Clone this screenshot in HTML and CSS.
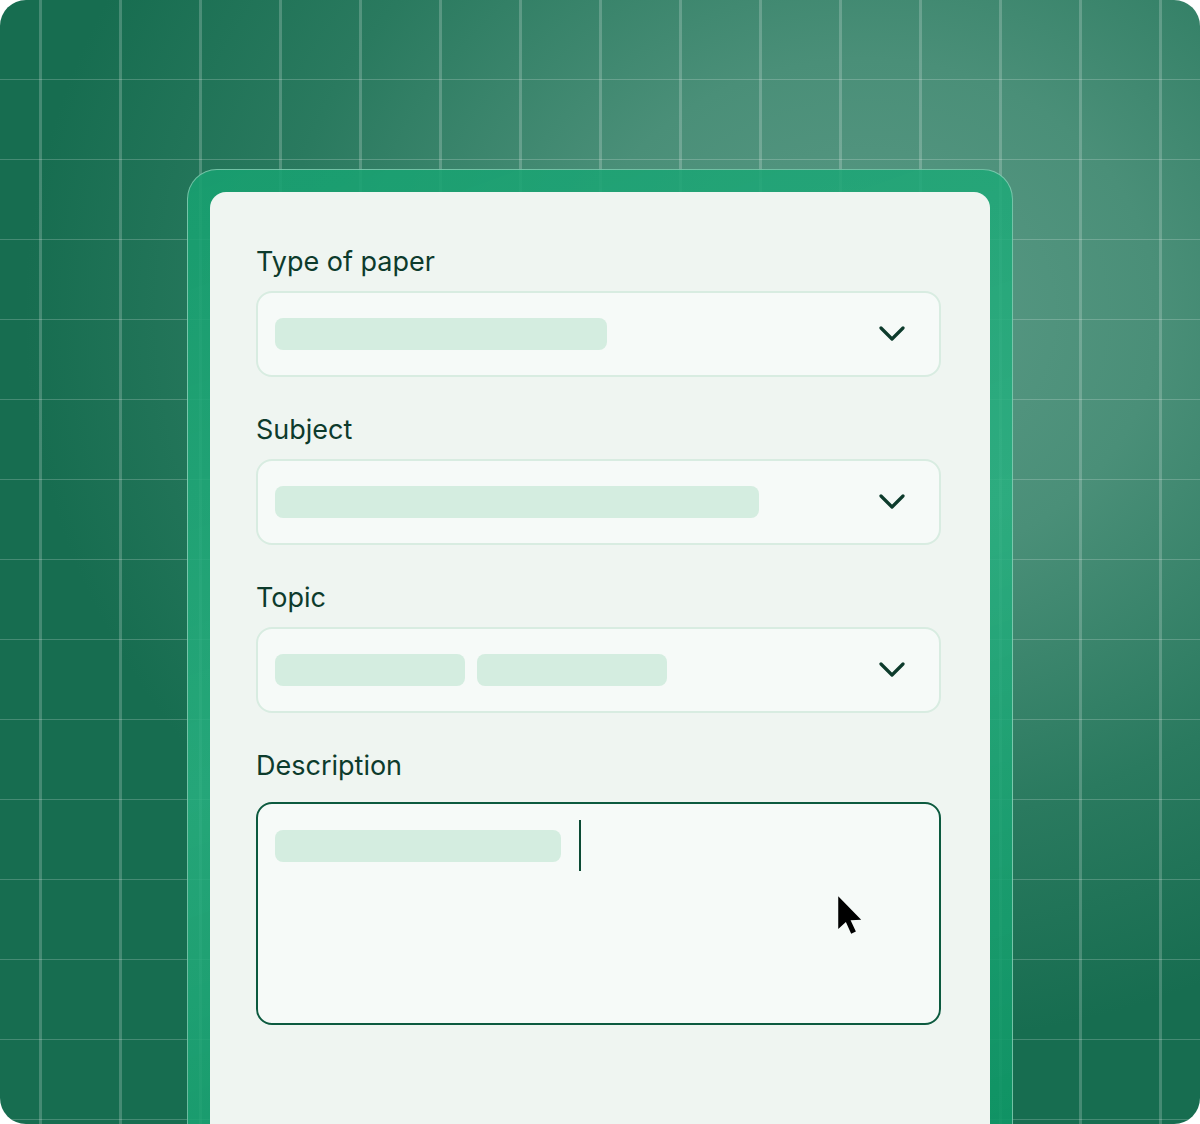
FILE: index.html
```html
<!DOCTYPE html>
<html lang="en">
<head>
<meta charset="utf-8">
<title>Order form</title>
<link rel="stylesheet" href="styles.css">
</head>
<body>
<div class="stage">
  <div class="frame">
    <form class="card">
      <div class="field">
        <label class="label">Type of paper</label>
        <div class="select">
          <span class="pill" style="width:332px"></span>
          <svg class="chev" viewBox="0 0 26 16" width="26" height="16"><polyline points="2,2 13,13 24,2"/></svg>
        </div>
      </div>
      <div class="field">
        <label class="label">Subject</label>
        <div class="select">
          <span class="pill" style="width:484px"></span>
          <svg class="chev" viewBox="0 0 26 16" width="26" height="16"><polyline points="2,2 13,13 24,2"/></svg>
        </div>
      </div>
      <div class="field">
        <label class="label">Topic</label>
        <div class="select">
          <span class="pill" style="width:190px"></span>
          <span class="pill" style="width:190px"></span>
          <svg class="chev" viewBox="0 0 26 16" width="26" height="16"><polyline points="2,2 13,13 24,2"/></svg>
        </div>
      </div>
      <div class="field field-text">
        <label class="label">Description</label>
        <div class="textarea">
          <div class="line">
            <span class="pill" style="width:286px"></span>
            <span class="caret"></span>
          </div>
          <svg class="pointer" viewBox="0 0 22 34" width="26" height="40"><path d="M1 1 L1 29 L7.5 23 L12 33 L16 31 L11.5 21.5 L20.5 21 Z"/></svg>
        </div>
      </div>
    </form>
  </div>
</div>
</body>
</html>
```
FILE: styles.css
```css
html, body {
  margin: 0;
  padding: 0;
  background: #ffffff;
}

.stage {
  position: relative;
  width: 1200px;
  height: 1124px;
  border-radius: 26px;
  overflow: hidden;
  box-sizing: border-box;
  padding-top: 169px;
  display: flex;
  justify-content: center;
  background:
    linear-gradient(to right, transparent 39px, rgba(255,255,255,0.2) 39px, rgba(255,255,255,0.2) 42px, transparent 42px) 0 0 / 80px 80px,
    linear-gradient(to bottom, transparent 79px, rgba(255,255,255,0.2) 79px, rgba(255,255,255,0.2) 82px, transparent 82px) 0 0 / 80px 80px,
    radial-gradient(ellipse 70% 65% at 72% 28%, #5b9a86 0%, #4a8f78 35%, #2a7a5f 70%, #176d50 100%),
    #176d50;
  font-family: Inter, "Noto Sans", sans-serif;
}

.frame {
  width: 826px;
  box-sizing: border-box;
  padding: 22px 22px 0;
  border: 1px solid rgba(255, 255, 255, 0.38);
  border-bottom: none;
  border-radius: 30px 30px 0 0;
  background: linear-gradient(160deg, rgba(24, 160, 112, 0.9) 0%, rgba(40, 176, 128, 0.85) 50%, rgba(16, 150, 102, 0.92) 100%);
}

.card {
  margin: 0;
  height: 100%;
  box-sizing: border-box;
  padding: 54px 49px 0 46px;
  background: #eff5f1;
  border-radius: 16px 16px 0 0;
  display: flex;
  flex-direction: column;
  gap: 37px;
}

.field {
  display: flex;
  flex-direction: column;
  gap: 13px;
}

.field-text {
  gap: 20px;
}

.label {
  font-size: 27px;
  line-height: 32px;
  color: #0d3b2c;
  letter-spacing: 0;
}

.select {
  height: 86px;
  box-sizing: border-box;
  border: 2px solid #d8ece1;
  border-radius: 16px;
  background: #f6faf8;
  display: flex;
  align-items: center;
  gap: 12px;
  padding: 0 34px 0 17px;
}

.pill {
  display: block;
  height: 32px;
  border-radius: 8px;
  background: #d4ede0;
  flex: none;
}

.chev {
  margin-left: auto;
  fill: none;
  stroke: #0d3b2c;
  stroke-width: 3.2;
  stroke-linecap: round;
  stroke-linejoin: round;
}

.textarea {
  position: relative;
  height: 223px;
  box-sizing: border-box;
  border: 2px solid #0c5a3f;
  border-radius: 16px;
  background: #f6faf8;
  padding: 16px 17px;
}

.line {
  display: flex;
  align-items: center;
  gap: 18px;
}

.line .pill {
  margin-top: 10px;
  margin-bottom: 9px;
}

.caret {
  display: block;
  width: 2px;
  height: 51px;
  background: #0c4a35;
}

.pointer {
  position: absolute;
  left: 579px;
  top: 91px;
  fill: #000000;
}
```
